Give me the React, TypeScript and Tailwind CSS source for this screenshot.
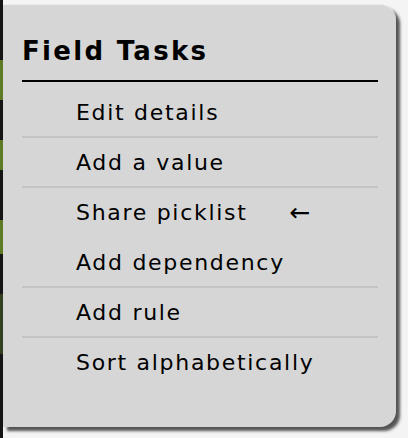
// Field tasks context menu panel
const items = [
    { label: 'Edit details', line: true },
    { label: 'Add a value', line: true },
    { label: 'Share picklist', line: false, arrow: true },
    { label: 'Add dependency', line: true },
    { label: 'Add rule', line: true },
    { label: 'Sort alphabetically', line: false },
];

export default function App() {
    return (
        <div className="relative flex h-[438px] w-[408px] overflow-hidden bg-[#f4f4f4] font-['DejaVu_Sans',sans-serif]">
            <div className="flex w-[3px] flex-col bg-[#151515]">
                <div className="mt-[60px] h-[40px] bg-[#5d7a25]" />
                <div className="mt-[40px] h-[30px] bg-[#5d7a25]" />
                <div className="mt-[50px] h-[34px] bg-[#5d7a25]" />
                <div className="mt-[40px] h-[60px] bg-[#33401f]" />
            </div>
            <div className="mt-[4px] h-[423px] w-[393px] rounded-r-[16px] border-t border-[#ececec] bg-[#d6d6d6] pl-[19px] pr-[18px] shadow-[4px_4px_3px_rgba(0,0,0,0.65)]">
                <div className="border-b-2 border-black pt-[29px] pb-[12px] text-[26px] leading-[34px] font-bold tracking-[2.3px] text-black">
                    Field Tasks
                </div>
                <div className="pt-[6px]">
                    {items.map((item) => (
                        <div
                            key={item.label}
                            className={`flex h-[50px] items-center border-b-2 pl-[54px] text-[22px] tracking-[1.7px] text-black ${
                                item.line ? 'border-[#c4c4c4]' : 'border-transparent'
                            }`}
                        >
                            <span>{item.label}</span>
                            {item.arrow && <span className="ml-[42px] text-[25px] leading-none tracking-normal">←</span>}
                        </div>
                    ))}
                </div>
            </div>
        </div>
    );
}
